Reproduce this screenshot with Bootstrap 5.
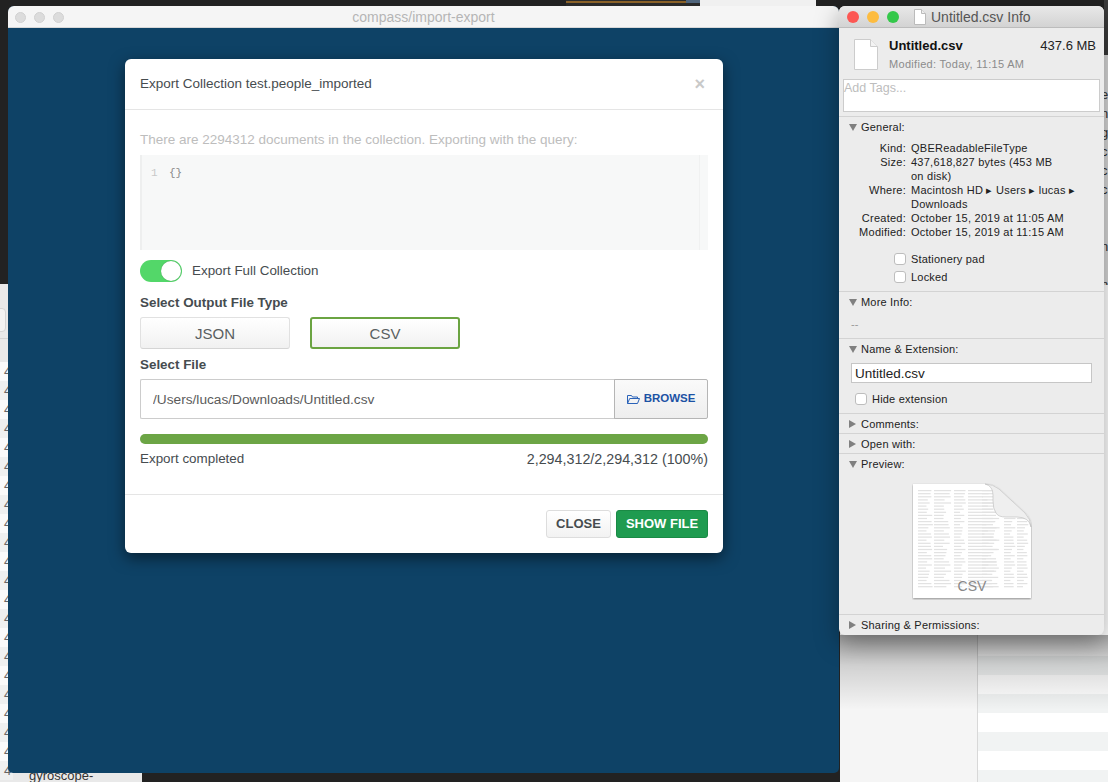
<!DOCTYPE html>
<html lang="en">
<head>
  <meta charset="UTF-8">
  <title>compass/import-export</title>
  <link rel="stylesheet" href="https://cdn.jsdelivr.net/npm/bootstrap@5.3.3/dist/css/bootstrap.min.css">
  <style>
    html, body { width: 1108px; height: 782px; overflow: hidden; }
    body { background: #222; font-family: "Liberation Sans", Arial, sans-serif; position: relative; }

    /* desktop bits showing behind the windows */
    .bg-piece { position: absolute; }
    .bg-left { left: 0; top: 284px; width: 142px; height: 498px; background: #e9e9e9; overflow: hidden; }
    .bg-left-box { left: -6px; top: 24px; width: 12px; height: 24px; border: 1px solid #d5d5d5; border-radius: 4px; background: #f3f3f3; }
    .bg-left-line { left: 0; width: 142px; height: 1px; background: #d4d4d4; }
    .bg-rows { left: 0; top: 78px; width: 13px; }
    .bg-row { height: 19px; line-height: 19px; padding-left: 4px; font-size: 13px; color: #666; background: #fafafa; }
    .bg-row:nth-child(even) { background: #eff0f0; }
    .bg-gyro { left: 29px; top: 484px; font-size: 13px; line-height: 16px; color: #333; }
    .bg-right { left: 840px; top: 285px; width: 268px; height: 497px; background: #f5f5f5; overflow: hidden; }
    .bg-right-cell { left: 137px; top: 0; width: 131px; height: 497px; background: #fff; border-left: 1px solid #d8d8d8; }
    .bg-stripe { height: 19px; background: #f1f3f3; }
    .bg-stripe-gap { height: 19px; }
    .bg-shade { left: 840px; top: 635px; width: 268px; height: 75px; background: linear-gradient(#00000059, #00000026 40%, #0000); }
    .bg-edge { left: 1104px; top: 55px; width: 4px; height: 230px; background: #d6d6d6; overflow: hidden; font-size: 13px; color: #333; }
    .bg-edge-text { top: 30px; left: -3px; line-height: 19px; }
    .bg-strip-dark { left: 1104px; top: 0; width: 4px; height: 55px; background: #3b3b3b; }
    .bg-top-a { left: 566px; top: 0; width: 134px; height: 6px; background: #2a2a2a; }
    .bg-top-b { left: 566px; top: 1px; width: 120px; height: 2px; background: #8a6128; }
    .bg-top-c { left: 686px; top: 0; width: 14px; height: 3px; background: #50657c; }
    .bg-top-d { left: 700px; top: 0; width: 116px; height: 6px; background: #f0f0f0; }

    /* compass window */
    .compass-win { position: absolute; left: 8px; top: 6px; width: 831px; height: 767px; border-radius: 6px 6px 5px 5px; overflow: hidden; background: #0e4266; }
    .compass-bar { height: 22px; background: #f5f5f5; border-bottom: 1px solid #d8d8d8; color: #b5b5b5; font-size: 14px; line-height: 23px; text-align: center; position: relative; }
    .bar-dot { width: 11px; height: 11px; border-radius: 50%; background: #dcdcdc; border: 1px solid #d0d0d0; }
    .bar-dots { position: absolute; left: 7px; top: 6px; gap: 8px; }
    .export-modal { width: 598px; height: 494px; margin: 31px 0 0 117px; border: 0; border-radius: 6px; background: #fff; box-shadow: 0 5px 15px #00000080; color: #464c4f; font-size: 13.4px; }
    .export-modal .modal-header { height: 51px; padding: 0 15px; border-bottom: 1px solid #e5e5e5; }
    .modal-ttl { font-size: 13.5px; color: #464c4f; }
    .x-close { color: #c9c9c9; font-size: 18px; font-weight: 700; line-height: 1; margin-right: 3px; }
    .export-modal .modal-body { padding: 0 15px; }
    .query-note { color: #bdbdbd; font-size: 13.5px; margin: 21px 0 0; line-height: 17px; height: 24px; }
    .query-box { height: 95px; background: #f7f8f8; border-left: 2px solid #eeefef; font-family: "Liberation Mono", monospace; font-size: 11px; padding: 10px 0 0 9px; position: relative; }
    .query-num { color: #c8c8c8; width: 18px; }
    .query-txt { color: #888; }
    .query-gutter { position: absolute; top: 0; right: 8px; height: 95px; border-left: 1px solid #f0f1f1; }
    .toggle-row { height: 22px; margin-top: 10px; }
    .ios-toggle { width: 42px; height: 22px; border-radius: 11px; background: #53d769; position: relative; }
    .ios-knob { position: absolute; right: 1px; top: 1px; width: 20px; height: 20px; border-radius: 50%; background: #fff; box-shadow: 0 0 1px #0006; }
    .toggle-lbl { margin-left: 10px; }
    .field-lbl { font-weight: 700; line-height: 16px; margin: 0; }
    .lbl-output { margin-top: 13px; }
    .type-row { gap: 20px; margin-top: 6px; }
    .lbl-file { margin-top: 8px; }
    .type-btn { width: 150px; height: 32px; padding: 0; font-size: 15px; line-height: 1; color: #5a5f62; border: 1px solid #e1e1e1; border-bottom-color: #d5d5d5; border-radius: 3px; background: linear-gradient(#fff, #f1f1f1); }
    .type-btn.picked { border: 2px solid #6ba442; }
    .file-group { height: 40px; margin-top: 6px; }
    .file-input { border: 1px solid #ccc; border-right: 0; border-radius: 2px 0 0 2px; font-size: 13.7px; color: #5b5b5b; padding: 0 12px; height: 40px; box-shadow: none; }
    .browse-btn { width: 94px; height: 40px; padding: 0; border: 1px solid #b5b5b5; border-radius: 0 2px 2px 0; background: linear-gradient(#fafafa, #eee); color: #1c52a4; font-size: 11.5px; font-weight: 700; }
    .export-bar { height: 10px; margin-top: 15px; border-radius: 5px; background: #eee; }
    .export-bar .progress-bar { background: #6ca545; }
    .status-row { margin-top: 7px; line-height: 16px; }
    .status-count { font-size: 14.3px; }
    .export-modal .modal-footer { position: absolute; left: 0; right: 0; top: 435px; height: 59px; padding: 15px; border-top: 1px solid #e5e5e5; gap: 5px; }
    .export-modal .modal-footer > * { margin: 0; }
    .foot-btn { height: 28px; padding: 0; font-size: 13px; font-weight: 700; border-radius: 3px; }
    .close-btn { width: 65px; color: #464c4f; background: linear-gradient(#fff, #f2f2f2); border: 1px solid #ddd; }
    .show-btn { width: 92px; color: #fff; background: #1f9b50; border: 1px solid #1a8a45; }

    /* finder info window */
    .info-win { position: absolute; left: 839px; top: 6px; width: 265px; height: 629px; background: #ececec; border-radius: 6px; overflow: hidden; box-shadow: 0 8px 24px #00000059; color: #222; font-family: "Liberation Sans", Arial, sans-serif; font-size: 11px; }
    .info-bar { height: 22px; background: linear-gradient(#e8e8e8, #d3d3d3); border-bottom: 1px solid #bcbcbc; padding-left: 8px; }
    .mac-dot { width: 12px; height: 12px; border-radius: 50%; }
    .mac-red { background: #fc5753; }
    .mac-yellow { background: #fdbc40; }
    .mac-green { background: #34c84a; }
    .traffic { gap: 8px; }
    .title-doc { margin-left: 15px; }
    .info-title { color: #555; font-size: 14px; line-height: 22px; padding-top: 1px; margin-left: 5px; }
    .info-head { height: 51px; padding: 11px 8px 0 15px; }
    .info-text { margin-left: 11px; margin-top: -1px; }
    .info-name { font-size: 13px; font-weight: 700; color: #111; line-height: 16px; }
    .info-size { font-size: 13px; color: #222; line-height: 16px; }
    .info-mod { color: #8b8b8b; line-height: 15px; margin-top: 3px; letter-spacing: .3px; }
    .tag-box { height: 33px; margin: 0 4px; background: #fff; border: 1px solid #ccc; color: #bdbdbd; font-size: 12.5px; line-height: 16px; padding: 0; }
    .info-sec { border-top: 1px solid #d3d3d3; height: 20px; }
    .sec-general { margin-top: 4px; height: 175px; }
    .sec-more { height: 47px; }
    .sec-name { height: 75px; }
    .sec-preview { height: 161px; }
    .sec-head { height: 20px; padding-left: 10px; gap: 4px; line-height: 20px; letter-spacing: .2px; }
    .tri-down { width: 0; height: 0; border-left: 4px solid transparent; border-right: 4px solid transparent; border-top: 7px solid #808080; }
    .tri-right { width: 0; height: 0; margin-right: 1px; border-top: 4px solid transparent; border-bottom: 4px solid transparent; border-left: 7px solid #808080; }
    .kv-grid { display: grid; grid-template-columns: 67px 1fr; column-gap: 5px; line-height: 14px; letter-spacing: .25px; margin-top: 4px; }
    .kv-key { text-align: right; }
    .mac-check { width: 12px; height: 12px; background: #fff; border: 1px solid #bdbdbd; border-radius: 3px; flex: none; }
    .check-row { gap: 5px; letter-spacing: .2px; line-height: 14px; }
    .chk-stationery { margin: 13px 0 0 55px; }
    .chk-locked { margin: 4px 0 0 55px; }
    .chk-hide { margin: 9px 0 0 16px; }
    .name-input { height: 20px; margin: 4px 12px 0; width: 241px; background: #fff; border: 1px solid #c6c6c6; font-size: 13.5px; line-height: 19px; padding-left: 3px; }
    .preview-doc { display: block; margin: 9px 0 0 73px; }
    .dash-txt { color: #999; padding-left: 12px; line-height: 16px; }
  </style>
</head>
<body>
  <!-- stuff behind the windows -->
  <div class="bg-piece bg-top-a"></div>
  <div class="bg-piece bg-top-b"></div>
  <div class="bg-piece bg-top-c"></div>
  <div class="bg-piece bg-top-d"></div>
  <div class="bg-piece bg-strip-dark"></div>
  <div class="bg-piece bg-edge"><div class="bg-piece bg-edge-text">e<br>n<br>g<br>c<br>c<br>c<br><br><br>n<br><br>n<br>n<br>p<br>c<br>c</div></div>

  <div class="bg-piece bg-left">
    <div class="bg-piece bg-left-box"></div>
    <div class="bg-piece bg-left-line" style="top: 54px"></div>
    <div class="bg-piece bg-left-line" style="top: 78px"></div>
    <div class="bg-piece bg-rows" id="left-rows"></div>
    <div class="bg-piece bg-gyro">gyroscope-</div>
  </div>

  <div class="bg-piece bg-right">
    <div class="bg-piece bg-right-cell">
      <div style="height: 371px"></div>
      <div class="bg-stripe"></div><div class="bg-stripe-gap"></div>
      <div class="bg-stripe"></div><div class="bg-stripe-gap"></div>
      <div class="bg-stripe"></div><div class="bg-stripe-gap"></div>
      <div class="bg-stripe"></div>
    </div>
  </div>
  <div class="bg-piece bg-shade"></div>

  <!-- compass window -->
  <div class="compass-win">
    <div class="compass-bar">
      <div class="bar-dots d-flex">
        <span class="bar-dot"></span><span class="bar-dot"></span><span class="bar-dot"></span>
      </div>
      compass/import-export
    </div>

    <div class="modal-content export-modal">
      <div class="modal-header">
        <span class="modal-ttl">Export Collection test.people_imported</span>
        <span class="x-close ms-auto">&times;</span>
      </div>
      <div class="modal-body">
        <p class="query-note">There are 2294312 documents in the collection. Exporting with the query:</p>
        <div class="query-box d-flex">
          <span class="query-num">1</span><span class="query-txt">{}</span>
          <span class="query-gutter"></span>
        </div>
        <div class="toggle-row d-flex align-items-center">
          <span class="ios-toggle"><span class="ios-knob"></span></span>
          <span class="toggle-lbl">Export Full Collection</span>
        </div>
        <p class="field-lbl lbl-output">Select Output File Type</p>
        <div class="d-flex type-row">
          <button class="btn type-btn">JSON</button>
          <button class="btn type-btn picked">CSV</button>
        </div>
        <p class="field-lbl lbl-file">Select File</p>
        <div class="input-group file-group">
          <input class="form-control file-input" value="/Users/lucas/Downloads/Untitled.csv">
          <button class="btn browse-btn d-flex align-items-center justify-content-center gap-1">
            <svg width="13" height="11" viewBox="0 0 13 11" fill="none" stroke="#2a62b8" stroke-width="1"><path d="M.5 9.5v-8h4l1 1.5h5v2M.5 9.5l2.2-5h9.8l-2 5z"/></svg>
            BROWSE
          </button>
        </div>
        <div class="progress export-bar"><div class="progress-bar" style="width: 100%"></div></div>
        <div class="status-row d-flex justify-content-between">
          <span>Export completed</span>
          <span class="status-count">2,294,312/2,294,312 (100%)</span>
        </div>
      </div>
      <div class="modal-footer">
        <button class="btn foot-btn close-btn">CLOSE</button>
        <button class="btn foot-btn show-btn">SHOW FILE</button>
      </div>
    </div>
  </div>

  <!-- finder info window -->
  <div class="info-win">
    <div class="info-bar d-flex align-items-center">
      <span class="d-flex traffic">
        <span class="mac-dot mac-red"></span><span class="mac-dot mac-yellow"></span><span class="mac-dot mac-green"></span>
      </span>
      <svg class="title-doc" width="12" height="16" viewBox="0 0 12 16"><path d="M.5.5h7l4 4v11H.5z" fill="#fff" stroke="#bbb"/><path d="M7.5.5v4h4" fill="#eee" stroke="#bbb"/></svg>
      <span class="info-title">Untitled.csv Info</span>
    </div>

    <div class="info-head d-flex">
      <svg width="24" height="31" viewBox="0 0 24 31"><path d="M.5.5h16l7 7v23H.5z" fill="#fff" stroke="#ccc"/><path d="M16.5.5v7h7" fill="#f3f3f3" stroke="#ccc"/></svg>
      <div class="flex-grow-1 info-text">
        <div class="d-flex justify-content-between">
          <span class="info-name">Untitled.csv</span>
          <span class="info-size">437.6 MB</span>
        </div>
        <div class="info-mod">Modified: Today, 11:15 AM</div>
      </div>
    </div>

    <div class="tag-box">Add Tags...</div>

    <div class="info-sec sec-general">
      <div class="sec-head d-flex align-items-center"><span class="tri-down"></span>General:</div>
      <div class="kv-grid">
        <span class="kv-key">Kind:</span><span>QBEReadableFileType</span>
        <span class="kv-key">Size:</span><span>437,618,827 bytes (453 MB<br>on disk)</span>
        <span class="kv-key">Where:</span><span>Macintosh HD ▸ Users ▸ lucas ▸<br>Downloads</span>
        <span class="kv-key">Created:</span><span>October 15, 2019 at 11:05 AM</span>
        <span class="kv-key">Modified:</span><span>October 15, 2019 at 11:15 AM</span>
      </div>
      <div class="check-row d-flex align-items-center chk-stationery"><span class="mac-check"></span>Stationery pad</div>
      <div class="check-row d-flex align-items-center chk-locked"><span class="mac-check"></span>Locked</div>
    </div>

    <div class="info-sec sec-more">
      <div class="sec-head d-flex align-items-center"><span class="tri-down"></span>More Info:</div>
      <div class="dash-txt mt-1">--</div>
    </div>

    <div class="info-sec sec-name">
      <div class="sec-head d-flex align-items-center"><span class="tri-down"></span>Name &amp; Extension:</div>
      <div class="name-input">Untitled.csv</div>
      <div class="check-row d-flex align-items-center chk-hide"><span class="mac-check"></span>Hide extension</div>
    </div>

    <div class="info-sec"><div class="sec-head d-flex align-items-center"><span class="tri-right"></span>Comments:</div></div>
    <div class="info-sec"><div class="sec-head d-flex align-items-center"><span class="tri-right"></span>Open with:</div></div>

    <div class="info-sec sec-preview">
      <div class="sec-head d-flex align-items-center"><span class="tri-down"></span>Preview:</div>
      <svg class="preview-doc" width="120" height="117" viewBox="0 0 120 117">
        <defs>
          <filter id="doc-shadow" x="-10%" y="-10%" width="120%" height="120%"><feDropShadow dx="0" dy="1" stdDeviation="1" flood-color="#000" flood-opacity=".4"/></filter>
        </defs>
        <path d="M1 1h72q8 0 14 5l26 24q6 6 6 14v71H1z" fill="#fff" filter="url(#doc-shadow)"/>
        <g id="preview-lines"></g>
        <path d="M73 1q8 0 14 5l26 24q6 6 6 14q-2-10-14-10H94q-8 0-10-4-3-4-3-12V12Q81 3 73 1z" fill="#efefef" stroke="#bbb" stroke-width=".6"/>
        <text x="60" y="108" text-anchor="middle" font-family="Liberation Sans, Arial, sans-serif" font-size="14" fill="#888">CSV</text>
      </svg>
    </div>

    <div class="info-sec"><div class="sec-head d-flex align-items-center"><span class="tri-right"></span>Sharing &amp; Permissions:</div></div>
  </div>

  <script src="https://cdn.jsdelivr.net/npm/bootstrap@5.3.3/dist/js/bootstrap.bundle.min.js"></script>
  <script>
    // the column of numbers cut off at the left edge
    const rows = document.getElementById('left-rows');
    for (let i = 0; i < 22; i++) {
      rows.innerHTML += '<div class="bg-row">4</div>';
    }

    // tiny table on the csv preview
    const cols = [[6, 16], [22, 18], [42, 12], [56, 30], [70, 18], [92, 12], [105, 12]];
    let lines = '';
    let seed = 7;
    for (let y = 7; y < 106; y += 3.1) {
      cols.forEach((c) => {
        if (y < 34 && c[0] > 85) return;
        seed = (seed * 31 + 11) % 97;
        const w = c[1] * (0.5 + (seed % 50) / 100);
        lines += `<rect x="${c[0]}" y="${y}" width="${w.toFixed(1)}" height="1.2" fill="#e2e2e2"/>`;
      });
    }
    document.getElementById('preview-lines').innerHTML = lines;
  </script>
</body>
</html>
